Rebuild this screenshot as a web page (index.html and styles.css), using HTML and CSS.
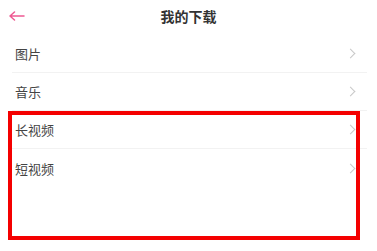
FILE: index.html
```html
<!DOCTYPE html>
<html lang="zh-CN">
<head>
    <meta charset="UTF-8">
    <meta name="viewport" content="width=device-width, initial-scale=1.0">
    <title>我的下载</title>
    <link rel="stylesheet" href="styles.css">
</head>
<body>
    <div class="page">
        <div class="header">
            <span class="back">
                <svg width="16" height="10" viewBox="0 0 16 10">
                    <path d="M1 5H15M1 5L5.5 1M1 5L5.5 9" fill="none" stroke="#ee5a92" stroke-width="1.5" stroke-linecap="round"/>
                </svg>
            </span>
            <h1>我的下载</h1>
        </div>

        <div class="list">
            <div class="item">
                <span>图片</span>
                <span class="chevron"></span>
            </div>
            <div class="item">
                <span>音乐</span>
                <span class="chevron"></span>
            </div>
            <div class="item">
                <span>长视频</span>
                <span class="chevron"></span>
            </div>
            <div class="item">
                <span>短视频</span>
                <span class="chevron"></span>
            </div>
        </div>

        <!-- annotation box -->
        <div class="highlight"></div>
    </div>
</body>
</html>
```

FILE: styles.css
```css
* {
    margin: 0;
    padding: 0;
    box-sizing: border-box;
    font-family: "Noto Sans CJK SC", "Noto Sans", sans-serif;
}

body {
    background: #fff;
    color: #333;
}

.page {
    position: relative;
    width: 377px;
    height: 251px;
    overflow: hidden;
}

.header {
    height: 35px;
    display: flex;
    align-items: center;
    justify-content: center;
    position: relative;
}

.header h1 {
    font-size: 14px;
    font-weight: bold;
    color: #333;
    margin-top: -3px;
}

.back {
    position: absolute;
    left: 9px;
    top: 11px;
    display: flex;
}

.list {
    padding: 0 10px 0 15px;
}

.item {
    height: 38px;
    display: flex;
    align-items: center;
    justify-content: space-between;
    font-size: 13px;
    color: #444;
    border-bottom: 1px solid #f2f2f2;
    margin-left: -3px;
    padding-left: 3px;
}

.item:last-child {
    border-bottom: none;
}

.chevron {
    width: 7px;
    height: 7px;
    border-top: 1.2px solid #c8c8c8;
    border-right: 1.2px solid #c8c8c8;
    transform: rotate(45deg);
    margin-right: 13px;
}

.highlight {
    position: absolute;
    left: 8px;
    top: 111px;
    width: 352px;
    height: 129px;
    border: 4.5px solid #f40000;
}
```
